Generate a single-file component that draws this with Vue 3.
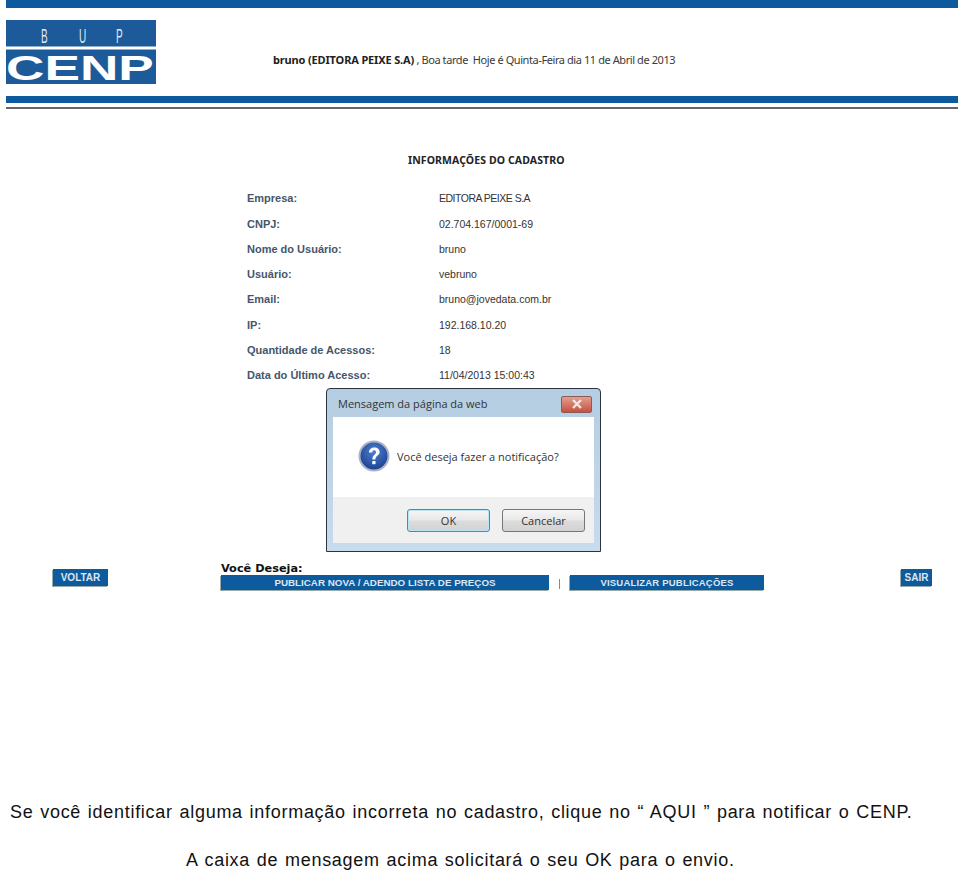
<script setup>
const rows = [
  ['Empresa:', 'EDITORA PEIXE S.A'],
  ['CNPJ:', '02.704.167/0001-69'],
  ['Nome do Usuário:', 'bruno'],
  ['Usuário:', 'vebruno'],
  ['Email:', 'bruno@jovedata.com.br'],
  ['IP:', '192.168.10.20'],
  ['Quantidade de Acessos:', '18'],
  ['Data do Último Acesso:', '11/04/2013 15:00:43'],
]
</script>

<template>
  <div class="page">
    <div class="bar-top"></div>

    <div class="head">
      <svg class="logo" width="150" height="64" viewBox="0 0 150 64">
        <rect width="150" height="26.5" fill="#1d5a99" />
        <rect y="29.5" width="150" height="34.5" fill="#1d5a99" />
        <text transform="translate(35,23) scale(0.5,1)" class="logo-bup">B</text>
        <text transform="translate(73,23) scale(0.5,1)" class="logo-bup">U</text>
        <text transform="translate(110,23) scale(0.5,1)" class="logo-bup">P</text>
        <text transform="translate(0,60) scale(1.52,1)" class="logo-cenp">CENP</text>
      </svg>
      <p class="greeting">
        <b>bruno (EDITORA PEIXE S.A)</b> , Boa tarde&nbsp; Hoje é Quinta-Feira dia 11 de Abril de 2013
      </p>
    </div>

    <div class="bar-mid"></div>
    <div class="line"></div>

    <h1 class="title">INFORMAÇÕES DO CADASTRO</h1>

    <div class="info">
      <template v-for="row in rows" :key="row[0]">
        <div class="label">{{ row[0] }}</div>
        <div class="value">{{ row[1] }}</div>
      </template>
    </div>

    <div class="dialog">
      <div class="dialog-title">
        <span>Mensagem da página da web</span>
        <span class="close">
          <svg width="12" height="10" viewBox="0 0 12 10">
            <path d="M2 1 L10 9 M10 1 L2 9" stroke="#f4e6e4" stroke-width="2.4" />
          </svg>
        </span>
      </div>
      <div class="dialog-body">
        <svg width="32" height="32" viewBox="0 0 32 32">
          <defs>
            <radialGradient id="q" cx="50%" cy="35%" r="65%">
              <stop offset="0" stop-color="#4d7fd0" />
              <stop offset="1" stop-color="#1c3f8e" />
            </radialGradient>
          </defs>
          <circle cx="16" cy="16" r="14.5" fill="url(#q)" stroke="#aab3c6" stroke-width="2" />
          <path d="M11 12.5 C11 9 13.5 7.5 16.3 7.5 C19.5 7.5 21.6 9.4 21.6 12 C21.6 15.6 17.4 15.6 17.4 19.4 L14.4 19.4 C14.4 14.6 18 14.8 18 12.2 C18 11 17.3 10.3 16.1 10.3 C14.9 10.3 14.3 11.2 14.3 12.5 Z" fill="#fff" />
          <rect x="14.3" y="21" width="3.2" height="3.2" fill="#fff" />
        </svg>
        <span>Você deseja fazer a notificação?</span>
      </div>
      <div class="dialog-foot">
        <button class="btn btn-ok">OK</button>
        <button class="btn">Cancelar</button>
      </div>
    </div>

    <div class="actions">
      <a class="small">VOLTAR</a>
      <div class="wish">
        <div class="wish-title">Você Deseja:</div>
        <div class="wish-row">
          <a class="wide wide-1">PUBLICAR NOVA / ADENDO LISTA DE PREÇOS</a>
          <span class="sep"></span>
          <a class="wide wide-2">VISUALIZAR PUBLICAÇÕES</a>
        </div>
      </div>
      <a class="small small-exit">SAIR</a>
    </div>

    <p class="note note-1">Se você identificar alguma informação incorreta no cadastro, clique no “ AQUI ” para notificar o CENP.</p>
    <p class="note note-2">A caixa de mensagem acima solicitará o seu OK para o envio.</p>
  </div>
</template>

<style>
html, body {
  background: #fff;
}
</style>

<style scoped>
.page {
  width: 960px;
  height: 872px;
  overflow: hidden;
  padding: 0 2px 0 6px;
  box-sizing: border-box;
  font-family: "Liberation Sans", Arial, sans-serif;
  color: #1a1a1a;
}
.bar-top {
  height: 8px;
  background: #0d5a9c;
}
.head {
  display: flex;
  align-items: center;
  height: 88px;
}
.logo {
  flex: none;
  overflow: visible;
}
.logo-bup {
  font-family: "Liberation Sans", sans-serif;
  font-size: 20px;
  fill: #dfe8f2;
}
.logo-cenp {
  font-family: "Liberation Sans", sans-serif;
  font-weight: 700;
  font-size: 35px;
  fill: #fff;
}
.greeting {
  margin: 14px 0 0 117px;
  font-family: "Noto Sans", sans-serif;
  font-size: 11px;
  letter-spacing: -0.42px;
  color: #3a3a3a;
  white-space: nowrap;
}
.greeting b {
  color: #222;
  letter-spacing: -0.15px;
}
.bar-mid {
  height: 7px;
  background: #0d5a9c;
}
.line {
  height: 2px;
  margin-top: 4px;
  background: #666;
}
.title {
  margin: 44px 0 0 402px;
  font-family: "Noto Sans", sans-serif;
  font-size: 10.5px;
  line-height: 14px;
  letter-spacing: 0.1px;
  color: #222;
  white-space: nowrap;
}
.info {
  display: grid;
  grid-template-columns: 192px 1fr;
  grid-auto-rows: 25.3px;
  align-items: center;
  margin: 18.6px 0 0 241px;
  font-size: 10.5px;
}
.label {
  font-size: 11px;
  font-weight: 700;
  color: #46566a;
}
.value {
  color: #333;
}
.value:nth-child(2) {
  letter-spacing: -0.5px;
}
.dialog {
  width: 275px;
  height: 164px;
  margin: 0.4px 0 0 320px;
  box-sizing: border-box;
  border: 1px solid #2b3440;
  border-radius: 4px 4px 0 0;
  background: linear-gradient(#b5cde2, #c7dcec);
  padding: 0 6px 8px;
  display: flex;
  flex-direction: column;
  font-family: "Open Sans", sans-serif;
  color: #333;
  font-size: 11px;
}
.dialog-title {
  height: 28px;
  flex: none;
  display: flex;
  align-items: center;
  justify-content: space-between;
  padding: 0 2px 0 5px;
  font-size: 11px;
}
.close {
  width: 29px;
  height: 15px;
  margin-top: 2px;
  display: flex;
  align-items: center;
  justify-content: center;
  background: linear-gradient(#e0a090, #c8503e);
  border: 1px solid #8a5a58;
  border-radius: 2px;
}
.dialog-body {
  flex: 1;
  background: #fff;
  display: flex;
  align-items: center;
  gap: 7px;
  padding: 0 0 2px 25px;
}
.dialog-foot {
  height: 46px;
  flex: none;
  background: #f0f0f0;
  display: flex;
  justify-content: flex-end;
  align-items: center;
  gap: 12px;
  padding: 0 9px 0 0;
}
.btn {
  width: 83px;
  height: 23px;
  padding: 0;
  font: inherit;
  color: #333;
  border: 1px solid #777;
  border-radius: 3px;
  background: linear-gradient(#f6f6f6, #e8e8e8 48%, #dcdcdc 52%, #d2d2d2);
}
.btn-ok {
  border-color: #3f8fb4;
  box-shadow: inset 0 0 0 1px #b8e4f6;
}
.actions {
  display: flex;
  align-items: flex-start;
  margin: 10px 0 0 47px;
}
.small,
.wide {
  background: #0d5a9c;
  color: #dde7f1;
  font-weight: 700;
  text-align: center;
  box-shadow: -1px 1px 0 #9aa;
}
.small {
  width: 55px;
  height: 17px;
  line-height: 17px;
  margin-top: 7px;
  flex: none;
  font-size: 10px;
}
.small-exit {
  width: 31px;
  margin-left: 137px;
}
.wish {
  margin-left: 113px;
  width: 543px;
  flex: none;
}
.wish-title {
  font-family: "DejaVu Sans", sans-serif;
  font-weight: 700;
  font-size: 11.3px;
  line-height: 13px;
  color: #111;
}
.wish-row {
  display: flex;
  align-items: center;
}
.wide {
  height: 15px;
  line-height: 15px;
  font-size: 9.8px;
}
.wide-1 {
  width: 328px;
}
.wide-2 {
  width: 194px;
  font-size: 9.5px;
  letter-spacing: 0.2px;
}
.sep {
  width: 1px;
  height: 10px;
  margin: 2px 10px 0;
  background: #888;
}
.note {
  margin: 0;
  font-size: 18px;
  line-height: 24px;
  color: #111;
  white-space: nowrap;
}
.note-1 {
  margin: 210px 0 0 4px;
  letter-spacing: 0.72px;
  word-spacing: 1px;
}
.note-2 {
  margin: 24px 0 0 180px;
  letter-spacing: 0.72px;
  word-spacing: 1px;
}
</style>
